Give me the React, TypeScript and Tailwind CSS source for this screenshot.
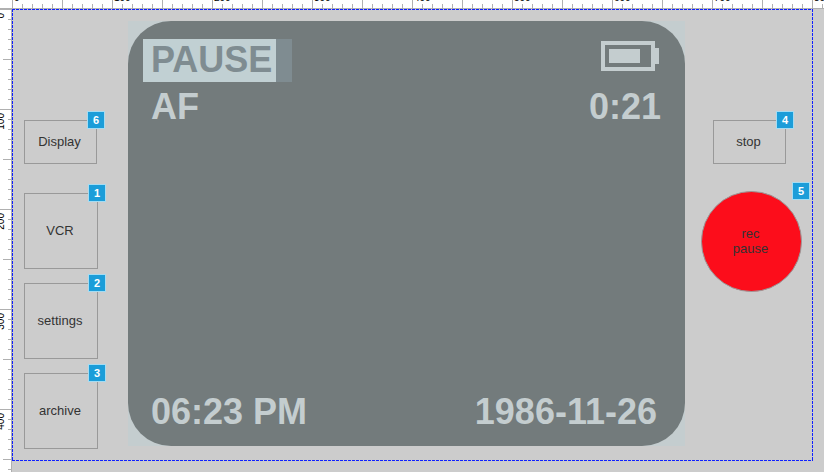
import type { ReactNode } from 'react';
import { clsx } from 'clsx';

const columnMarks = [0, 100, 200, 300, 400, 500, 600, 700, 800];
const rowMarks = [0, 100, 200, 300, 400];

function TopRuler() {
  return (
    <div className="flex h-[9px] overflow-hidden border-b border-[#b0b0b0] bg-white pl-3">
      {columnMarks.map((mark) => (
        <div key={mark} className="relative h-2 w-[100px] shrink-0">
          <svg className="absolute inset-0 size-full" aria-hidden="true" shapeRendering="crispEdges">
            <path d="M0.5 0V8M50.5 0V8" stroke="#b0b0b0" />
            <path
              d="M10.5 4V8M20.5 4V8M30.5 4V8M40.5 4V8M60.5 4V8M70.5 4V8M80.5 4V8M90.5 4V8"
              stroke="#b0b0b0"
            />
          </svg>
          <span className="absolute bottom-1 left-0.5 text-[10px] leading-3 text-black">{mark}</span>
        </div>
      ))}
    </div>
  );
}

function LeftRuler() {
  return (
    <div className="relative w-3 shrink-0 overflow-hidden border-r border-[#b0b0b0] bg-white">
      <div className="absolute inset-x-0 top-0">
        {rowMarks.map((mark) => (
          <div key={mark} className="relative h-[100px]">
            <svg className="absolute inset-0 size-full" aria-hidden="true" shapeRendering="crispEdges">
              <path d="M0 0.5H11M3 50.5H11" stroke="#b0b0b0" />
              <path
                d="M8 10.5H11M8 20.5H11M8 30.5H11M8 40.5H11M8 60.5H11M8 70.5H11M8 80.5H11M8 90.5H11"
                stroke="#b0b0b0"
              />
            </svg>
            <span className="absolute right-1 top-1 rotate-180 text-[10px] leading-3 text-black [writing-mode:vertical-rl]">
              {mark}
            </span>
          </div>
        ))}
      </div>
    </div>
  );
}

interface HotspotProps {
  note: number;
  round?: boolean;
  className?: string;
  children: ReactNode;
}

function Hotspot({ note, round, className, children }: HotspotProps) {
  return (
    <div className={clsx('relative', className)}>
      <button
        type="button"
        className={clsx(
          'size-full border border-[#999999] pb-0.5 pr-0.5 text-center text-[13px] leading-[15px] text-[#333333]',
          round && 'rounded-full bg-[#fc0d1b]',
        )}
      >
        {children}
      </button>
      <span className="absolute -right-2 -top-[9px] flex size-[18px] items-center justify-center border border-[#a5dcf2] bg-[#1b9dd9] text-[11px] font-bold leading-none text-white">
        {note}
      </span>
    </div>
  );
}

function Battery() {
  return (
    <svg
      className="mr-0.5 mt-0.5 h-[30px] w-[58px]"
      viewBox="0 0 58 30"
      fill="#c4cdcf"
      shapeRendering="crispEdges"
      role="img"
      aria-label="Battery"
    >
      <path fillRule="evenodd" d="M0 0H54V30H0ZM4 4V26H50V4Z" />
      <rect x="8" y="8" width="31" height="14" />
      <rect x="54" y="7" width="4" height="16" />
    </svg>
  );
}

function Viewfinder() {
  return (
    <main className="mb-[15px] mt-3 flex flex-1 bg-[#c4cdcf]">
      <div className="flex flex-1 flex-col justify-between rounded-[43px] bg-[#737b7c] pb-3.5 pl-[15px] pr-6 pt-[18px] text-4xl font-bold leading-[41px] text-[#c4cdcf]">
        <div className="flex justify-between">
          <div className="flex flex-col items-start gap-1">
            <div className="bg-[#7f8c91] pr-4">
              <div className="bg-[#c1d0d3] pb-0.5 pl-2 pr-1 text-[#7f8c91]">PAUSE</div>
            </div>
            <div className="pl-2">AF</div>
          </div>
          <div className="flex flex-col items-end justify-between">
            <Battery />
            <div>0:21</div>
          </div>
        </div>
        <div className="flex justify-between pl-2 pr-1">
          <div>06:23 PM</div>
          <div>1986-11-26</div>
        </div>
      </div>
    </main>
  );
}

// Dashed outline of the artboard
function Outline() {
  return (
    <svg
      className="pointer-events-none absolute inset-0 size-full"
      aria-hidden="true"
      shapeRendering="crispEdges"
      stroke="#0f20ff"
      strokeWidth="2"
      strokeDasharray="3 1"
    >
      <line x1="0" y1="0" x2="100%" y2="0" />
      <line x1="0" y1="100%" x2="100%" y2="100%" />
      <line x1="0" y1="0" x2="0" y2="100%" />
      <line x1="100%" y1="0" x2="100%" y2="100%" />
    </svg>
  );
}

export default function App() {
  return (
    <div className="flex min-h-screen flex-col overflow-hidden bg-[#cccccc] font-['Liberation_Sans',Arial,sans-serif]">
      <TopRuler />
      <div className="flex flex-1">
        <LeftRuler />
        <div className="relative mb-[11px] mr-[11px] flex flex-1">
          <Outline />
          <nav className="flex w-[116px] shrink-0 flex-col gap-3.5 pl-3 pt-[111px]">
            <Hotspot note={6} className="mb-[15px] h-11 w-[73px]">
              Display
            </Hotspot>
            <Hotspot note={1} className="h-[76px] w-[74px]">
              VCR
            </Hotspot>
            <Hotspot note={2} className="h-[76px] w-[74px]">
              settings
            </Hotspot>
            <Hotspot note={3} className="h-[76px] w-[74px]">
              archive
            </Hotspot>
          </nav>
          <Viewfinder />
          <aside className="flex w-32 shrink-0 flex-col gap-[27px] pl-4 pt-[111px]">
            <Hotspot note={4} className="ml-3 h-11 w-[73px]">
              stop
            </Hotspot>
            <Hotspot note={5} round className="size-[101px]">
              rec
              <br />
              pause
            </Hotspot>
          </aside>
        </div>
      </div>
    </div>
  );
}
